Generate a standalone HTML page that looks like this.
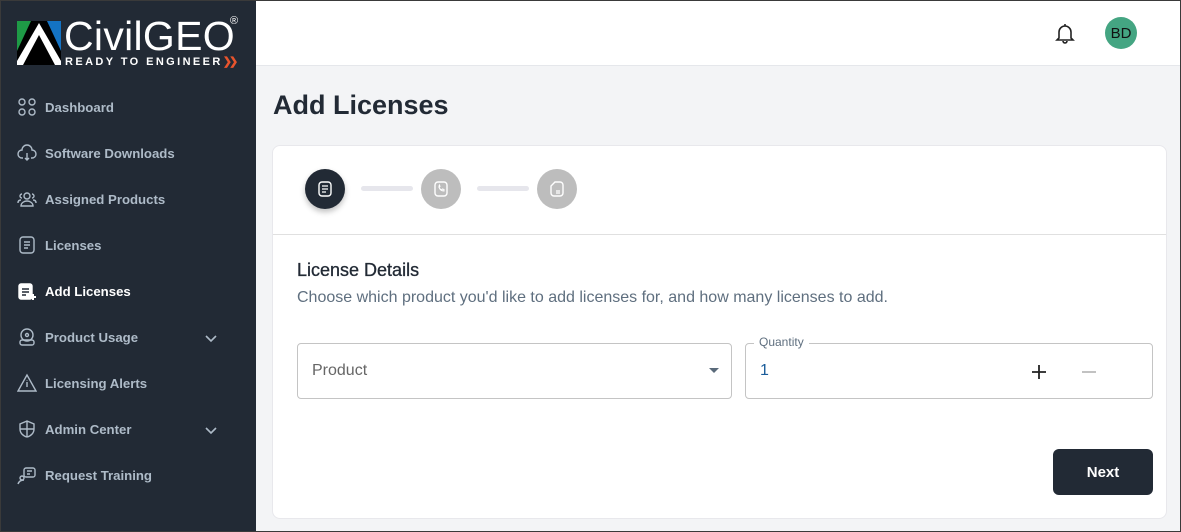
<!DOCTYPE html>
<html><head><style>
*{box-sizing:border-box;margin:0;padding:0}
body{width:1181px;height:532px;overflow:hidden;font-family:"Liberation Sans",sans-serif;background:#f3f4f6;position:relative}
.frame{position:absolute;inset:0;border:1px solid #3a3a3a;pointer-events:none;z-index:10}
.side{position:absolute;left:0;top:0;width:256px;height:532px;background:#222a35}
.nav{position:absolute;left:17px;display:flex;align-items:center;color:#aebbc8;font-size:13.2px;font-weight:bold}
.nav svg{width:20px;height:20px;margin-right:8px;stroke:#aebbc8;fill:none;stroke-width:1.4}
.nav.act{color:#fff}
.chev{position:absolute;left:204px;width:14px;height:14px}
.top{position:absolute;left:256px;top:0;right:0;height:66px;background:#fff;border-bottom:1px solid #e5e7eb}
h1{position:absolute;left:273px;top:90px;font-size:27px;color:#222a35;font-weight:bold}
.card{position:absolute;left:272px;top:145px;width:895px;height:374px;background:#fff;border-radius:8px;border:1px solid #e8e8ec}
.step{position:absolute;top:23px;width:40px;height:40px;border-radius:50%;background:#bdbdbd;display:flex;align-items:center;justify-content:center}
.bar{position:absolute;top:40px;width:52px;height:5px;border-radius:3px;background:#e6e6ec}
.field{position:absolute;border:1px solid #c4c4c4;border-radius:4px;height:56px}
</style></head><body>
<div class="side">
  <svg style="position:absolute;left:17px;top:21px" width="44" height="44" viewBox="0 0 44 44">
    <rect width="44" height="44" fill="#000"/><polygon points="0,0 14,0 0,30" fill="#1e9a46"/><polygon points="30,0 44,0 44,30" fill="#1473c4"/>
    <polygon points="22,2 0,40 0,44 6,44 22,14 38,44 44,44 44,40" fill="#fff"/>
  </svg>
  <div style="position:absolute;left:64px;top:13px;color:#fff;font-size:41px;letter-spacing:0.3px;font-family:'Liberation Sans';">CivilGEO</div>
  <div style="position:absolute;left:230px;top:15px;color:#fff;font-size:11px">®</div>
  <div style="position:absolute;left:65px;top:55px;color:#fff;font-size:11px;font-weight:bold;letter-spacing:2.4px;white-space:nowrap">READY TO ENGINEER<span style="color:#e8542d;letter-spacing:-3px">❯❯</span></div>

  <div class="nav" style="top:97px"><svg viewBox="0 0 20 20"><rect x="2" y="2" width="6" height="6" rx="3"/><rect x="12" y="2" width="6" height="6" rx="3"/><rect x="2" y="12" width="6" height="6" rx="3"/><rect x="12" y="12" width="6" height="6" rx="3"/></svg>Dashboard</div>
  <div class="nav" style="top:143px"><svg viewBox="0 0 20 20"><path d="M6 15H5a4 4 0 0 1 0-8 5 5 0 0 1 10 0 4 4 0 0 1 0 8h-1M10 10v7m-2-2 2 2 2-2"/></svg>Software Downloads</div>
  <div class="nav" style="top:189px"><svg viewBox="0 0 20 20"><circle cx="10" cy="7" r="3"/><path d="M4 17c0-3 3-5 6-5s6 2 6 5zM5 5a2 2 0 1 0 0 4M15 5a2 2 0 1 1 0 4M1 14c0-2 1-3 3-3M19 14c0-2-1-3-3-3"/></svg>Assigned Products</div>
  <div class="nav" style="top:235px"><svg viewBox="0 0 20 20"><rect x="3" y="2" width="14" height="16" rx="3"/><path d="M7 7h6M7 10h6M7 13h4"/></svg>Licenses</div>
  <div class="nav act" style="top:281px"><svg viewBox="0 0 20 20" style="stroke:#fff"><rect x="2" y="3" width="13" height="15" rx="2" fill="#fff"/><path d="M5 8h7M5 11h7M5 14h4" stroke="#222a35"/><path d="M16 13v6M13 16h6" stroke-width="2"/></svg>Add Licenses</div>
  <div class="nav" style="top:327px"><svg viewBox="0 0 20 20"><circle cx="10" cy="8" r="6"/><circle cx="10" cy="8" r="1.5"/><rect x="3" y="13" width="14" height="5" rx="2"/></svg>Product Usage</div>
  <div class="nav" style="top:373px"><svg viewBox="0 0 20 20"><path d="M10 2 1 18h18zM10 9v5M10 7v.5"/></svg>Licensing Alerts</div>
  <div class="nav" style="top:419px"><svg viewBox="0 0 20 20"><path d="M10 2 3 5v5c0 4 3 7 7 8 4-1 7-4 7-8V5zM10 2v16M3 10h14"/></svg>Admin Center</div>
  <div class="nav" style="top:465px"><svg viewBox="0 0 20 20"><rect x="7" y="3" width="11" height="9" rx="2"/><path d="M10 6h5M10 9h3"/><circle cx="5" cy="13" r="2"/><path d="M1 19c1-3 3-4 6-4"/></svg>Request Training</div>
  <svg class="chev" style="top:331px" viewBox="0 0 14 14"><path d="M2 5l5 5 5-5" stroke="#aebbc8" stroke-width="1.6" fill="none"/></svg>
  <svg class="chev" style="top:423px" viewBox="0 0 14 14"><path d="M2 5l5 5 5-5" stroke="#aebbc8" stroke-width="1.6" fill="none"/></svg>
</div>
<div class="top">
  <svg style="position:absolute;left:798px;top:22px" width="22" height="22" viewBox="0 0 22 22"><path d="M5 16V10a6 6 0 0 1 12 0v6l2 2H3zM9 19a2 2 0 0 0 4 0M11 2v2" stroke="#222" stroke-width="1.6" fill="none"/></svg>
  <div style="position:absolute;left:849px;top:17px;width:32px;height:32px;border-radius:50%;background:#44a582;color:#111;font-size:15px;display:flex;align-items:center;justify-content:center">BD</div>
</div>
<h1>Add Licenses</h1>
<div class="card">
  <div class="step" style="left:32px;background:#222a35;box-shadow:0 3px 6px rgba(0,0,0,.25)"><svg width="18" height="18" viewBox="0 0 18 18"><rect x="3" y="2" width="12" height="14" rx="3" stroke="#fff" stroke-width="1.4" fill="none"/><path d="M6 6h6M6 9h6M6 12h4" stroke="#fff" stroke-width="1.3"/></svg></div>
  <div class="bar" style="left:88px"></div>
  <div class="step" style="left:148px"><svg width="18" height="18" viewBox="0 0 18 18"><rect x="3" y="2" width="12" height="14" rx="3" stroke="#fff" stroke-width="1.4" fill="none"/><path d="M7 6c0 3 2 5 5 5l0-1.5-1.5-.5-1 1c-1-.5-2-1.5-2.5-2.5l1-1L7.5 5z" stroke="#fff" stroke-width="1" fill="none"/></svg></div>
  <div class="bar" style="left:204px"></div>
  <div class="step" style="left:264px"><svg width="18" height="18" viewBox="0 0 18 18"><path d="M7 2h5a3 3 0 0 1 3 3v8a3 3 0 0 1-3 3H6a3 3 0 0 1-3-3V6z" stroke="#fff" stroke-width="1.4" fill="none"/><path d="M8 11h4M8 13h4" stroke="#fff" stroke-width="1.2"/></svg></div>
  <div style="position:absolute;left:0;right:0;top:88px;border-top:1px solid #e0e0e0"></div>
  <div style="position:absolute;left:24px;top:114px;font-size:18px;color:#222a35;-webkit-text-stroke:0.3px #222a35">License Details</div>
  <div style="position:absolute;left:24px;top:143px;font-size:16px;color:#5f6f7f;white-space:nowrap">Choose which product you'd like to add licenses for, and how many licenses to add.</div>
  <div class="field" style="left:24px;top:197px;width:435px"><span style="position:absolute;left:14px;top:18px;font-size:16px;color:#666">Product</span><svg style="position:absolute;right:12px;top:24px" width="10" height="6"><path d="M0 0h10L5 5z" fill="#5a6a7a"/></svg></div>
  <div class="field" style="left:472px;top:197px;width:408px"><span style="position:absolute;left:8px;top:-9px;background:#fff;padding:0 5px;font-size:12px;color:#5f6f7f">Quantity</span><span style="position:absolute;left:14px;top:18px;font-size:16px;color:#1a5c9a">1</span>
  <svg style="position:absolute;left:285px;top:20px" width="16" height="16"><path d="M8 1v14M1 8h14" stroke="#222" stroke-width="1.8"/></svg>
  <svg style="position:absolute;left:335px;top:20px" width="16" height="16"><path d="M1 8h14" stroke="#bbb" stroke-width="1.8"/></svg></div>
  <div style="position:absolute;left:780px;top:303px;width:100px;height:46px;background:#222a35;border-radius:6px;color:#fff;font-weight:bold;font-size:15px;display:flex;align-items:center;justify-content:center">Next</div>
</div>
<div class="frame"></div>
</body></html>
